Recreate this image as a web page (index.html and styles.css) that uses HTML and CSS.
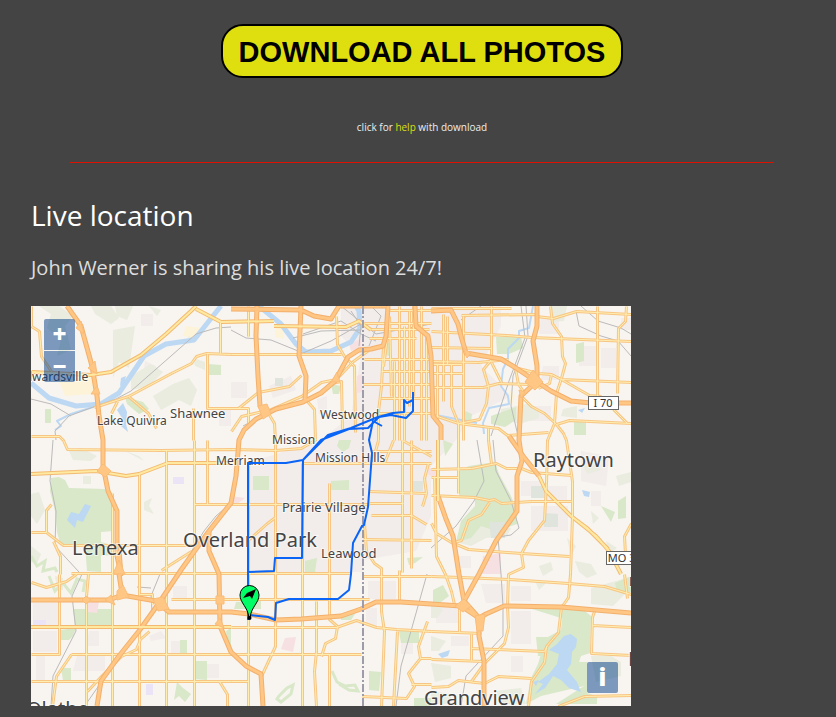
FILE: index.html
```html
<!DOCTYPE html>
<html lang="en">
<head>
    <meta charset="UTF-8">
    <meta name="viewport" content="width=device-width, initial-scale=1.0">
    <title>Live location</title>
    <link rel="stylesheet" href="styles.css">
</head>
<body>
    <div class="download">
        <button type="button" class="download-btn">DOWNLOAD ALL PHOTOS</button>
        <p class="download-help">click for <a href="#help">help</a> with download</p>
    </div>
    <hr>
    <h2>Live location</h2>
    <p class="intro">John Werner is sharing his live location 24/7!</p>

    <div class="map">
        <svg class="map-canvas" viewBox="0 0 600 400" preserveAspectRatio="xMidYMid slice" role="img" aria-label="Live location map">
            <defs>
                <g id="minor" transform="translate(0.5 0.5)">
                    <!-- west -->
                    <path d="M0 0V20L8 25L10 50L20 65M63 101L97 90L140 67L160 57L165 50L175 47L200 48H310M189 15V47M176 48V102H217V120M162 102V134M0 130H28L32 134L36 143L130 144L200 143L244 144L270 142L285 133M97 90L117 107L125 122M86 95L80 107"/>
                    <path d="M207 102L227 86L258 80L270 69M200 125L210 110L240 103L270 90L290 76L305 73L322 55L340 42M305 10L306 38L313 50L323 60L324 126M300 77L310 75L311 123M276 95L283 103L284 134M237 107L243 117L244 134V340L230 370"/>
                    <path d="M108 168V400M135 144V400M163 134V400M176 134V198M163 198H338M81 187V400M0 226H15L32 239H163M20 198L15 204V226M22 235L29 250V268M40 267H320M130 264L160 245M217 30V0M217 157V400M271 157V400M272 157H400M298 177V313L306 320L304 332L294 337L290 350M217 234L236 217L244 211"/>
                    <path d="M0 348H28V268M40 348H330M0 375H200M57 268L55 290V400M40 348L25 370L21 400M56 385L70 370L90 350L105 343L109 333L118 325M140 293H338M188 375L196 388V400M0 276L15 281L35 275L45 268M200 375H217M285 295V345L283 365L285 400M298 348V400M108 288H121V298"/>
                    <!-- downtown -->
                    <path d="M355 4H400M333 17H400M340 23H398M338 32H385M333 53H400M350 65H400M332 78H400M350 92H400M347 107H400M358 10L360 90M352 40L350 80L347 105V134M368 0V134M373 20V134M382 0V90M390 0V134M378 5V100M395 30V134M363 55V134M356 30L352 60"/>
                    <path d="M338 185L395 187M338 197H372M340 209H380L395 218M332 233L400 234M333 217L335 245L343 257L350 262V305L353 325L350 400M397 157L393 172L395 187L391 200M347 134L342 152M362 134L353 157M371 134V266M380 134V262M340 145H400M371 134L400 150M368 264V295M366 325L362 400M331 270L400 270M200 321H305L325 314L345 321L365 323L400 325M331 390L375 392L383 380L377 367L389 352L387 340L396 315M389 352H400M380 378H400"/>
                    <!-- east -->
                    <path d="M412 8V95M416 10V58M432 10V134M406 58V113M460 0V50M519 0L521 17L530 30L531 50L534 57L530 72L525 87L523 117L516 134L515 177L513 214L497 234L490 247L492 261L477 268L476 300L477 321L473 337L453 357L440 375M566 0V90M595 0L594 15L587 22L586 87"/>
                    <path d="M400 25L475 29L500 31L600 35M505 10L522 12L545 5L600 8M400 2H480M430 9L506 8M400 41L460 42M400 55L447 56L477 53M400 58H430M400 67H432M400 81H452L467 77L497 78M487 62L507 67L520 68L530 73L600 76M530 73L558 89L570 90M460 53L452 63L457 80L455 97L448 113L427 117L400 108M460 56L470 76M484 62L487 78L492 85M507 82L518 77L520 68M582 103L596 117"/>
                    <path d="M490 90L500 100L513 107L525 118L532 127L535 134L541 175V210L539 268L537 291L530 301L527 326L515 340L513 356L500 375L497 400M525 118L538 114L600 117M427 117L467 122L476 129L517 126M420 58V100L427 117V187M457 122V134L460 157M400 163L440 162L465 157L475 162L490 162L500 166L540 169M400 171H427"/>
                    <path d="M400 189L443 191L458 194L463 193L470 197L500 195L540 195M458 196L450 208L437 214L430 234L422 236M400 217L405 227L420 236L437 243L490 247L538 250M403 170L405 250L414 268L420 285L423 298M600 217L593 230L594 248"/>
                    <path d="M400 270L430 271L478 273L537 277L573 280L600 288M400 325L450 327M400 353L452 355M428 298V326M440 328V354M440 342L513 345L516 339M400 381L417 380L427 374L453 377L467 370L500 372M563 305L561 311L560 347L600 349M561 319L600 321M527 400L553 390L600 389M593 268L596 292"/>
                </g>
                <g id="trunk">
                    <path d="M0 66L60 69L80 66L110 49L135 28L160 5L165 0M165 3L190 16L243 15M243 20L315 21L328 15L340 24M0 168L65 165L95 170L108 168L137 157H200M0 321H200"/>
                    <path d="M407 134V195M508 170L515 185L540 210L565 230L578 245L590 268M540 210L556 222L577 243"/>
                </g>
                <g id="motorway">
                    <path d="M36 0L50 20L61 60L66 90L68 110L72 134V160L77 185L86 205V250L90 268L88 245"/>
                    <path d="M88 268L91 288M0 294H78L91 289L125 295L138 306H200L218 308L245 314L270 313L310 310L330 303L345 296H370L400 298L430 300L448 312L455 308L473 300L530 301L600 307"/>
                    <path d="M357 0L355 30L352 40L340 43L328 44L317 51L304 75L290 87L272 96L245 103L225 113L213 124L208 134L205 170L200 197L178 225L160 250L150 264L128 297L108 325L88 350L70 375L66 400"/>
                    <path d="M178 225V245L188 268L189 320L200 346L215 360L230 368L232 400"/>
                    <path d="M226 0L225 30L227 70L229 100L234 107M270 0L268 50L275 70L274 95M200 3L270 4L283 10L300 13L308 0H355M384 0L385 20L397 30L400 50L402 110L410 120V134"/>
                    <path d="M400 5L420 4L427 18L430 30L435 47L470 53L485 62L503 74L520 85L540 95L560 97H600M506 0V20L502 35L506 60V75L490 90L488 134L491 155L486 170V205L465 235L448 268L433 295"/>
                    <path d="M478 130L492 150L508 170M407 190L415 213L422 230L428 268L433 295L448 312V330L453 355V400"/>
                </g>
            </defs>

            <rect class="land" width="600" height="400"/>

            <g class="town">
                <path d="M310 0H440L470 20L450 60L480 90L440 110L425 134L400 160V210L385 245L332 254V266H217V157L290 134L320 110L330 50L310 30z"/>
                <path d="M200 76H216V92H200zM238 80L260 70L265 84L242 92zM286 93L296 90V108H288zM110 8H122V20H110zM188 103H200V120H188zM2 297H27V320H2zM2 325H26V346H2zM5 350H14V374H5zM46 350H74V365H42zM58 325H68V340H56zM118 330L130 325L135 332L120 335zM142 280H156V292H142zM140 335H156V347H140z"/>
                <path d="M430 0H470V20H430zM435 60L450 58L455 78H436zM510 10H528V28H508zM512 60H528V74H510zM490 100H520V115H492zM548 40H565V60H548zM570 42H585V62H570zM490 175H510V190H490zM516 180H536V194H516zM500 200H537V225H500zM425 250H440V262H425zM550 145L578 150L575 180L550 175zM405 300H427V317H405zM450 278H474V297H455zM480 280H500V295H480zM480 305H500V338H480zM420 330H438V340H420zM480 350H492V366H480zM337 275H365V293H337zM335 302H346V320H335zM370 330H382V348H370z"/>
                <path d="M170 358H188V372H170zM114 55L125 60L122 75L112 72zM560 185H570V200H560zM590 12H600V24H590z"/>
            </g>
            <g class="wood">
                <path d="M8 0L20 8L16 22L30 34L26 50L40 44L34 20L42 10L28 0zM60 0H80L88 12L80 18L64 8zM82 24L104 20L98 62L88 56L82 72zM84 0H102L96 14L86 10z"/>
                <path d="M142 78L158 72L166 84L160 100L148 94L130 104L122 90zM118 0L130 4L126 10zM154 26L166 30L160 36zM162 52L174 56V64L164 60zM100 70L120 58L132 66L118 80L100 84zM0 188L8 186L14 204L6 218L0 210zM38 145L50 142L66 150L60 155L42 154zM52 170H60V178H52zM94 145L108 150L113 155zM113 196L121 192L118 200L123 208L113 204z"/>
                <path d="M372 56L385 60L378 66zM519 0H536L533 15L522 16zM470 103L496 98L508 104V112L488 118L470 112zM532 103L546 100V112L530 110zM552 160L566 158L570 164L556 168zM575 235L586 242L578 248zM560 205L568 212L562 218zM585 170L600 166V176L588 180zM430 228L455 216L480 222L476 230L455 232L440 240L424 236zM544 255L560 258L566 268L556 272L548 266zM508 260L520 256L522 264L512 270zM400 295L412 304L406 312H400z"/>
                <path d="M400 330L415 335L408 345H400zM400 357L420 360V372L404 376zM560 282L596 272L600 282L582 300L560 298zM560 350L580 350L590 356V370L565 376zM400 385L420 388V398H400zM465 385L490 382L495 398H470zM0 240L10 248L6 258L0 256zM24 270L32 272V284L26 282zM536 232L545 240L540 250zM504 275L516 276L508 284z"/>
            </g>
            <g class="park">
                <path d="M20 172L28 171L34 174L38 182L74 183L82 192V225L70 226V236L84 240L80 249L70 250V266L56 265L54 238L30 240L26 226L24 205L19 185z"/>
                <path d="M42 303H80V320H44zM29 324L45 322L42 330L38 334H29zM14 103H20V117H14zM94 91L112 96L118 103L108 108L96 98zM177 58L190 59V69H178zM222 170H238V184H222zM300 175L318 174V184H300zM308 134H320L318 142L312 146L306 140zM300 78L310 80L308 88L302 88zM352 34L360 38V50L352 49z"/>
                <path d="M465 31L490 30L492 42L478 48H466zM545 38L553 36V55L545 57zM543 115H555V129H543zM428 165L438 160L464 156L468 168L480 190L486 205V218L465 225L450 220L440 232L425 236L430 215L444 200V192L428 190zM460 110L485 101V114L474 121L460 118zM587 195L595 190V212L587 213zM570 200L584 206L580 216zM412 134L422 138L414 150zM434 105L441 108L440 116H433z"/>
                <path d="M515 332L530 324L532 306L560 310L559 347L550 350L548 356H556V387L566 390V398H525L553 380L510 390L495 398L500 372L507 358zM505 331H516V350H507zM402 284L412 279L418 290L410 296H402zM368 325H388V337H370zM338 365L350 366L348 385L338 384zM274 255L286 252L284 266H274zM195 325L200 322V340L196 336zM149 334H156V347H149zM164 355H176V374L163 373zM30 362H40V374H32zM146 376L152 382L160 388L154 396L148 390L143 394zM376 252L392 251L384 257L378 259zM205 296L230 295V303H203zM310 309L324 308L320 314H310zM383 392H400V400H383zM485 298L550 302L560 310L530 312zM600 270L584 277L586 285L592 288L600 286z"/>
                <path class="loop" d="M301 365L306 376L314 380L324 379L327 385L318 384L308 378M248 390L256 382L262 379L260 388L250 396L246 393zM0 250L6 260L14 255L12 265L24 262L26 266M18 270L24 285L32 277L40 287L46 273L54 275L52 286"/>
            </g>
            <g class="industrial">
                <path d="M244 17H253V33L244 31zM155 20L170 22L168 32L152 30zM28 75L62 70V88L34 90zM480 83L484 90L481 100L477 94z"/>
                <path class="pink" d="M326 70L331 68V86L326 87zM254 332L265 331L262 346L250 343zM56 297L68 295L66 307L56 306zM200 190L214 192L206 198H200zM400 162L406 164V170H400zM395 160L400 163V170L397 168zM318 38L330 33V42L320 45zM452 250L470 247V268H450z"/>
                <path class="violet" d="M142 171H153V178H142zM115 378H122V389H115zM2 314H15V320H2z"/>
                <path class="grey" d="M244 72H252V80H244zM380 175H392V185H380zM513 207L527 208V221H513zM500 180H514V192H500zM458 216H474V232H460z"/>
            </g>

            <path class="river" d="M0 77L18 92L45 100L70 98L88 87L105 62L113 50L135 38L163 34L178 15L190 0M228 0L250 18L265 38L275 46L300 45L320 36L329 22L328 5L325 0"/>
            <path class="stream" d="M502 0L498 22L488 25L488 32L477 43V53L472 63L470 80L477 90L478 98L458 102L452 117L453 128M405 109L420 112L446 117M65 100L40 108L26 115L30 120L24 124"/>
            <g class="water">
                <path d="M36 214L40 206L48 208L54 198L60 200L56 208L52 216L46 214L44 222zM86 104L92 97L96 106L95 118L97 126L90 120L91 112zM90 72L95 70L93 78L89 80zM551 184L559 186L558 191L553 190zM547 104L554 102L551 107L554 109z"/>
                <path d="M533 330L540 328L546 333L545 341L541 346L540 358L536 364L546 376L550 386L538 382L530 374L522 370L514 382L504 388L512 378L507 376L518 368L526 358L528 348L518 344L526 338zM502 376L508 374L505 380zM407 348L413 346L419 344L417 350L411 352z"/>
            </g>

            <g class="rail">
                <path d="M25 134L24 125L38 110L65 100L85 93L100 85L140 50L165 28L185 22L200 21M0 93L20 98L40 110M200 24L215 32L240 34L272 47L300 35L330 18M272 28L310 15L330 28L345 35M320 5L330 20L328 40M338 40L350 10L340 0M262 32L290 25L330 24M310 0L345 28L400 18"/>
                <path d="M495 0L497 30L482 70L480 100L488 134M550 0L567 15L590 22L600 28M545 5L548 20L570 30L587 35L600 50M430 14L450 0M490 0L494 32L478 75L460 130"/>
                <path d="M462 134L465 165L480 195L488 222L480 229L467 231L470 268L472 300V330L435 370L430 400M400 242L425 220L443 195L453 175L446 134M22 134L19 175L25 205L24 240L48 266M200 197L185 210L173 225L160 246M129 268L120 290L121 305L92 345L55 398M106 281L120 282M51 268L41 290L45 325L22 370L20 400M396 268L380 325L370 360L365 400M313 60L300 80L270 96L240 105L212 120"/>
            </g>

            <use class="minor-casing" href="#minor"/>
            <use class="trunk-casing" href="#trunk"/>
            <use class="minor-fill" href="#minor"/>
            <use class="motorway-casing" href="#motorway"/>
            <use class="motorway-fill" href="#motorway"/>
            <use class="trunk-fill" href="#trunk"/>
            <!-- interchanges -->
            <path class="junction" d="M66 165L72 158L80 165L74 171zM45 22L50 15L53 28zM57 62L64 55L66 68zM60 88L66 80L69 88zM122 293L132 291L138 303L127 305zM185 290H193V298H185zM227 100L236 98L240 108L232 113zM300 76L306 66L309 76zM494 76L502 64L512 76L504 84zM424 300L433 293L440 300L432 306zM444 310L454 308L452 325H446zM74 294L80 289L84 299zM51 294L55 290L60 294L55 298zM82 268L88 254L94 268zM86 285L92 279L98 291L86 294zM184 318L189 312L193 322zM432 42L440 47L436 52zM488 84L494 86L490 92z"/>
            <path class="state-line" d="M332 0V400"/>

            <g class="labels">
                <text class="small" x="-13" y="75">Edwardsville</text>
                <text class="small" x="66" y="119">Lake Quivira</text>
                <text class="medium" x="139" y="112">Shawnee</text>
                <text class="small" x="289" y="113">Westwood</text>
                <text class="small" x="241" y="138">Mission</text>
                <text class="small" x="185" y="159">Merriam</text>
                <text class="small" x="284" y="156">Mission Hills</text>
                <text class="medium" x="251" y="206">Prairie Village</text>
                <text class="medium" x="290" y="252">Leawood</text>
                <text class="large" x="152" y="241">Overland Park</text>
                <text class="large" x="41" y="249">Lenexa</text>
                <text class="large" x="502" y="161">Raytown</text>
                <text class="large" x="393" y="399">Grandview</text>
                <text class="large" x="-5" y="410">Olathe</text>
                <text class="small" x="598" y="280">L</text>
                <text class="large" x="597" y="360">L</text>
            </g>
            <g class="shields">
                <rect x="557.5" y="90.5" width="30" height="13"/>
                <text x="572" y="101">I 70</text>
                <rect x="575.5" y="245.500" width="40" height="13"/>
                <text x="597" y="256">MO 350</text>
            </g>

            <path class="route" d="M382 86V105L375 112L360 109L348 111L337 122L318 123L290 134L272 154L255 157H217V314M382 94L376 97L373 94V106L362 107L347 111L320 122L297 129L272 154L271 252H244L243 265L217 266M351 120L342 115L338 134L341 147L337 201L333 219L331 220L322 237L320 268L318 284L307 293H258L245 297L244 314L237 311L219 309"/>
            <g class="pin">
                <path d="M218 312C217 301 209 297 209 289A9 9 0 0 1 228 289C228 297 220 301 219 312z"/>
                <path class="pin-arrow" d="M225 283L221 293L219 290L212 292L216 287z"/>
                <circle class="pin-tip" cx="218.500" cy="312" r="2"/>
            </g>
        </svg>

        <div class="zoom">
            <button type="button" aria-label="Zoom in">+</button>
            <button type="button" aria-label="Zoom out">−</button>
        </div>
        <button type="button" class="info" aria-label="Attributions">i</button>
    </div>
</body>
</html>
```

FILE: styles.css
```css
* {
    box-sizing: border-box;
}

body {
    margin: 0;
    padding: 24px 23px 11px 31px;
    background: #444;
    color: #ddd;
    font-family: "Open Sans", sans-serif;
}

/* Download */
.download {
    text-align: center;
}

.download-btn {
    height: 54px;
    padding: 2px 16px 0;
    border: 2px solid #000;
    border-radius: 22px;
    background: #dfdf0f;
    color: #000;
    font-family: "Liberation Sans", Arial, sans-serif;
    font-size: 29px;
    font-weight: bold;
    line-height: 48px;
    cursor: pointer;
}

.download-help {
    margin: 41px 0 0;
    font-size: 10px;
    line-height: 16px;
    color: #eee;
}

.download-help a {
    color: #dfdf0f;
    text-decoration: none;
}

hr {
    width: 90%;
    height: 1px;
    margin: 27px auto 0;
    border: 0;
    background: #d10;
}

h2 {
    margin: 33px 0 0;
    font-size: 28px;
    font-weight: normal;
    line-height: 38px;
    color: #fff;
}

.intro {
    margin: 20px 0 24px;
    font-size: 20px;
    line-height: 28px;
}

/* Map */
.map {
    position: relative;
    max-width: 600px;
    overflow: hidden;
}

.map-canvas {
    display: block;
    width: 100%;
    font-family: "Noto Sans", sans-serif;
}

.land {
    fill: #f8f4f0;
}

.town {
    fill: #f2ecea;
}

.wood {
    fill: #e9ecdf;
}

.park {
    fill: #d8e8c8;
}

.park .loop {
    fill: none;
    stroke: #d8e8c8;
    stroke-width: 3;
}

.industrial {
    fill: #fdf3d8;
}

.industrial .pink {
    fill: #f6e0e2;
}

.industrial .violet {
    fill: #ebe4f6;
}

.industrial .grey {
    fill: #dfe4dc;
}

.water {
    fill: #bcd8f3;
}

.river,
.stream,
.rail,
.route,
.state-line,
.minor-casing,
.minor-fill,
.trunk-casing,
.trunk-fill,
.motorway-casing,
.motorway-fill {
    fill: none;
    stroke-linejoin: round;
}

.river {
    stroke: #bcd8f3;
    stroke-width: 5;
}

.stream {
    stroke: #bcd8f3;
    stroke-width: 2;
}

.rail {
    stroke: #bbb;
    stroke-width: 1;
}

.minor-casing {
    stroke: #f8c684;
    stroke-width: 3;
}

.minor-fill {
    stroke: #ffeeb0;
    stroke-width: 1;
}

.trunk-casing {
    stroke: #f3b970;
    stroke-width: 4;
}

.trunk-fill {
    stroke: #ffe9a0;
    stroke-width: 2;
}

.motorway-casing {
    stroke: #f3b06c;
    stroke-width: 5;
}

.motorway-fill {
    stroke: #ffc684;
    stroke-width: 3;
}

.junction {
    fill: #ffc684;
    stroke: #f9bd7a;
}

.state-line {
    stroke: #9e9cab;
    stroke-width: 2;
    stroke-dasharray: 8 2 2 2;
}

.labels {
    fill: #444;
    stroke: #fff;
    stroke-opacity: 0.6;
    stroke-width: 2;
    paint-order: stroke;
}

.small {
    font-size: 12px;
}

.medium {
    font-size: 13px;
}

.large {
    font-size: 20px;
}

.shields rect {
    fill: #fff;
    stroke: #666;
}

.shields text {
    fill: #333;
    font-size: 11px;
    text-anchor: middle;
}

.route {
    stroke: #0a64f5;
    stroke-width: 2;
}

.pin {
    fill: #0f6;
    stroke: #000;
}

.pin .pin-arrow,
.pin .pin-tip {
    fill: #000;
    stroke: none;
}

/* Map controls */
.zoom {
    position: absolute;
    top: 13px;
    left: 13px;
    display: flex;
    flex-direction: column;
    gap: 1px;
}

.zoom button,
.info {
    width: 31px;
    height: 31px;
    padding: 0 0 1px;
    border: 0;
    background: rgba(0, 60, 136, 0.5);
    color: #fff;
    font-family: "Open Sans", sans-serif;
    font-size: 24px;
    font-weight: 800;
    line-height: 28px;
    cursor: pointer;
}

.zoom button {
    border-radius: 2px 2px 0 0;
}

.zoom button:last-child {
    border-radius: 0 0 2px 2px;
}

.info {
    position: absolute;
    right: 13px;
    bottom: 13px;
    border-radius: 2px;
}
```
